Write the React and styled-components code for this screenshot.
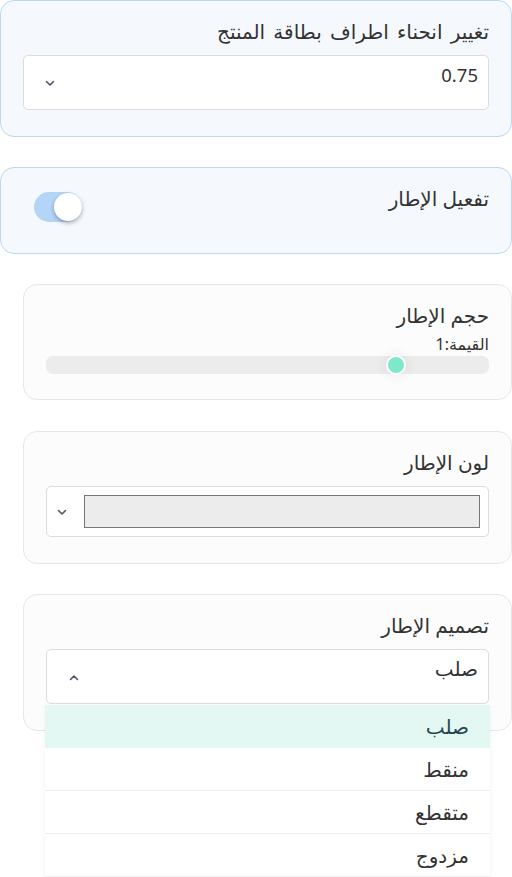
import styled, { createGlobalStyle } from "styled-components";

const GlobalStyle = createGlobalStyle`
  html, body {
    margin: 0;
    padding: 0;
    background: #ffffff;
  }
  body {
    font-family: "Noto Sans", "DejaVu Sans", sans-serif;
    color: #333;
  }
`;

const Page = styled.div`
  direction: rtl;
  width: 512px;
  display: flex;
  flex-direction: column;
  gap: 30px;
`;

const Card = styled.div`
  position: relative;
  box-sizing: border-box;
  margin-left: ${(p) => (p.$nested ? "23px" : "0")};
  margin-top: ${(p) => p.$mt || "0"};
  padding: 17px 22px ${(p) => p.$bottom || "26px"};
  border-radius: 14px;
  border: 1px solid ${(p) => (p.$blue ? "#b9d8f5" : "#e3e7ee")};
  background: ${(p) => (p.$blue ? "#f5f9fe" : "#fcfcfc")};
`;

const Title = styled.div`
  font-size: 20px;
  line-height: 28px;
  color: #333;
  word-spacing: ${(p) => p.$ws || "0"};
  margin-bottom: ${(p) => p.$mb || "9px"};
`;

const Row = styled.div`
  display: flex;
  align-items: flex-start;
  justify-content: space-between;
`;

const Select = styled.div`
  box-sizing: border-box;
  height: ${(p) => p.$h || "55px"};
  display: flex;
  align-items: flex-start;
  padding: ${(p) => p.$pad || "5px 10px"};
  background: #fff;
  border: 1px solid #dcdcdc;
  border-radius: 5px;
`;

const Value = styled.div`
  flex: 1;
  font-size: ${(p) => p.$size || "20px"};
  line-height: 28px;
  color: #333;
`;

const Chevron = styled.svg`
  align-self: center;
  margin-left: ${(p) => p.$ml || "12px"};
  margin-top: 2px;
  flex-shrink: 0;
`;

const Swatch = styled.div`
  flex: 1;
  height: 33px;
  box-sizing: border-box;
  background: #ececec;
  border: 1px solid #777;
  margin-left: 17px;
`;

const Toggle = styled.div`
  position: relative;
  width: 48px;
  height: 30px;
  margin-top: 7px;
  margin-left: 11px;
  border-radius: 15px;
  background: #b3d5f8;
`;

const Knob = styled.div`
  position: absolute;
  top: 1px;
  left: 20px;
  width: 28px;
  height: 28px;
  border-radius: 50%;
  background: #fff;
  box-shadow: 0 2px 4px rgba(0, 0, 0, 0.3);
`;

const SmallLabel = styled.div`
  font-size: 16px;
  line-height: 20px;
  color: #333;
  margin: 4px 0 2px;
`;

const Track = styled.div`
  position: relative;
  height: 18px;
  border-radius: 7px;
  background: #ececec;
`;

const Thumb = styled.div`
  position: absolute;
  top: -1px;
  width: 20px;
  height: 20px;
  box-sizing: border-box;
  margin-left: -10px;
  border-radius: 50%;
  border: 2px solid #fff;
  background: #7de8cc;
  box-shadow: 0 0 10px 4px rgba(0, 0, 0, 0.04);
`;

const DropWrap = styled.div`
  display: flex;
  flex-direction: column;
`;

const Menu = styled.div`
  position: relative;
  z-index: 2;
  margin: -26px 22px 0 45px;
  background: #fff;
  border-radius: 4px 4px 0 0;
  box-shadow: 0 2px 6px rgba(0, 0, 0, 0.05);
`;

const Option = styled.div`
  height: 43px;
  box-sizing: border-box;
  padding: 0 21px;
  display: flex;
  align-items: center;
  font-size: 20px;
  color: ${(p) => (p.$active ? "#1d4650" : "#333")};
  background: ${(p) => (p.$active ? "#e3f8f2" : "#fff")};
  border-bottom: 1px solid ${(p) => (p.$active ? "#e3f8f2" : "#efefef")};
`;

const Down = ({ ml }) => (
  <Chevron $ml={ml} width="10" height="7" viewBox="0 0 10 7">
    <path d="M1.5 1.5 L5 5 L8.5 1.5" fill="none" stroke="#4a5568" strokeWidth="1.6" strokeLinecap="round" strokeLinejoin="round" />
  </Chevron>
);

const Up = ({ ml }) => (
  <Chevron $ml={ml} width="10" height="7" viewBox="0 0 10 7">
    <path d="M1.5 5.5 L5 2 L8.5 5.5" fill="none" stroke="#4a5568" strokeWidth="1.6" strokeLinecap="round" strokeLinejoin="round" />
  </Chevron>
);

const styles = ["صلب", "منقط", "متقطع", "مزدوج"];

const App = () => {
  const size = 0.79;
  return (
    <>
      <GlobalStyle />
      <Page>
        <Card $blue>
          <Title $ws="3px">تغيير انحناء اطراف بطاقة المنتج</Title>
          <Select>
            <Value $size="18.5px">0.75</Value>
            <Down ml="11px" />
          </Select>
        </Card>

        <Card $blue $bottom="31px">
          <Row>
            <Title $mb="0">تفعيل الإطار</Title>
            <Toggle>
              <Knob />
            </Toggle>
          </Row>
        </Card>

        <Card $nested $bottom="25px">
          <Title $mb="0">حجم الإطار</Title>
          <SmallLabel>القيمة:1</SmallLabel>
          <Track>
            <Thumb style={{ left: `${size * 100}%` }} />
          </Track>
        </Card>

        <Card $nested $mt="1px">
          <Title>لون الإطار</Title>
          <Select $h="51px" $pad="8px 8px">
            <Swatch />
            <Down ml="2px" />
          </Select>
        </Card>

        <DropWrap>
          <Card $nested>
            <Title>تصميم الإطار</Title>
            <Select>
              <Value>صلب</Value>
              <Up ml="12px" />
            </Select>
          </Card>
          <Menu>
            {styles.map((s, i) => (
              <Option key={s} $active={i === 0}>
                {s}
              </Option>
            ))}
          </Menu>
        </DropWrap>
      </Page>
    </>
  );
};

export default App;
